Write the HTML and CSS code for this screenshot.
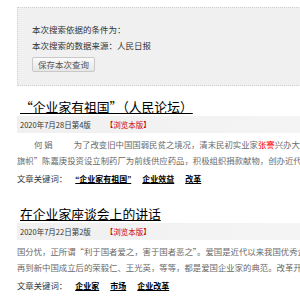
FILE: index.html
```html
<!DOCTYPE html>
<html lang="zh">
<head>
<meta charset="utf-8">
<link rel="stylesheet" href="styles.css">
</head>
<body>
<div class="page">
  <div class="search-box">
    <p class="cond">本次搜索依据的条件为：</p>
    <p class="cond">本次搜索的数据来源：人民日报</p>
    <button class="save-btn">保存本次查询</button>
  </div>

  <div class="article">
    <h3 class="title"><a href="#">“企业家有祖国”（人民论坛）</a></h3>
    <div class="meta"><span class="date">2020年7月28日第4版</span><a class="view" href="#">【浏览本版】</a></div>
    <p class="excerpt"><span class="author">何 娟</span>为了改变旧中国国弱民贫之境况，清末民初实业家<em class="hl">张謇</em>兴办大实业<br>旗帜”陈嘉庚投资设立制药厂为前线供应药品，积极组织捐款献物，创办近代</p>
    <div class="keywords"><span class="kw-label">文章关键词：</span><a href="#">“企业家有祖国”</a><a href="#">企业效益</a><a href="#">改革</a></div>
  </div>

  <div class="article">
    <h3 class="title"><a href="#">在企业家座谈会上的讲话</a></h3>
    <div class="meta"><span class="date">2020年7月22日第2版</span><a class="view" href="#">【浏览本版】</a></div>
    <p class="excerpt">国分忧，正所谓“利于国者爱之，害于国者恶之”。爱国是近代以来我国优秀企业家<br>再到新中国成立后的荣毅仁、王光英，等等，都是爱国企业家的典范。改革开放以来</p>
    <div class="keywords"><span class="kw-label">文章关键词：</span><a href="#">企业家</a><a href="#">市场</a><a href="#">企业改革</a></div>
  </div>
</div>
</body>
</html>
```

FILE: styles.css
```css
html, body {
  margin: 0;
  padding: 0;
  overflow: hidden;
  background: #fff;
}
body {
  font-family: "Noto Sans CJK SC", "Noto Sans", sans-serif;
  color: #333;
}
.page {
  width: 420px;
  padding: 7px 0 0 17px;
}
.search-box {
  background: #f0f0f0;
  border: 1px dotted #cfcfcf;
  padding: 13px 0 13px 14px;
}
.cond {
  margin: 0;
  font-size: 8.5px;
  line-height: 16px;
  color: #333;
}
.save-btn {
  display: block;
  margin-top: 4px;
  height: 15px;
  padding: 0 5px;
  font-family: inherit;
  font-size: 8.5px;
  line-height: 13px;
  color: #555;
  background: linear-gradient(#fbfbfb, #e6e6e6);
  border: 1px solid #c8c8c8;
  border-radius: 2px;
}
.article {
  margin-top: 12px;
}
.article + .article {
  margin-top: 17px;
}
.title {
  margin: 0;
  padding-left: 3px;
  font-size: 12.8px;
  line-height: 17px;
  font-weight: normal;
}
.title a {
  color: #000;
  text-decoration: underline;
  text-underline-offset: 1px;
}
.meta {
  display: flex;
  align-items: center;
  height: 17px;
  margin-top: 1px;
  padding-left: 3px;
  background: linear-gradient(90deg, #f0f0f0, #f6f6f6);
  font-size: 7.5px;
}
.date {
  color: #333;
}
.view {
  margin-left: 15px;
  color: #c00;
  text-decoration: none;
}
.excerpt {
  margin: 3px 0 0;
  font-size: 8.4px;
  line-height: 16px;
  color: #6a6a6a;
  white-space: nowrap;
}
.author {
  display: inline-block;
  margin-left: 17px;
  margin-right: 21px;
}
.hl {
  font-style: normal;
  color: #f00;
}
.keywords {
  display: flex;
  align-items: baseline;
  margin-top: 2px;
  line-height: 16px;
  color: #333;
}
.kw-label {
  font-size: 8.4px;
  margin-right: 8px;
}
.keywords a {
  margin-right: 11px;
  font-family: "Liberation Serif", "Noto Sans CJK SC", serif;
  font-size: 8px;
  color: #000;
  font-weight: bold;
  text-decoration: underline;
}
```
